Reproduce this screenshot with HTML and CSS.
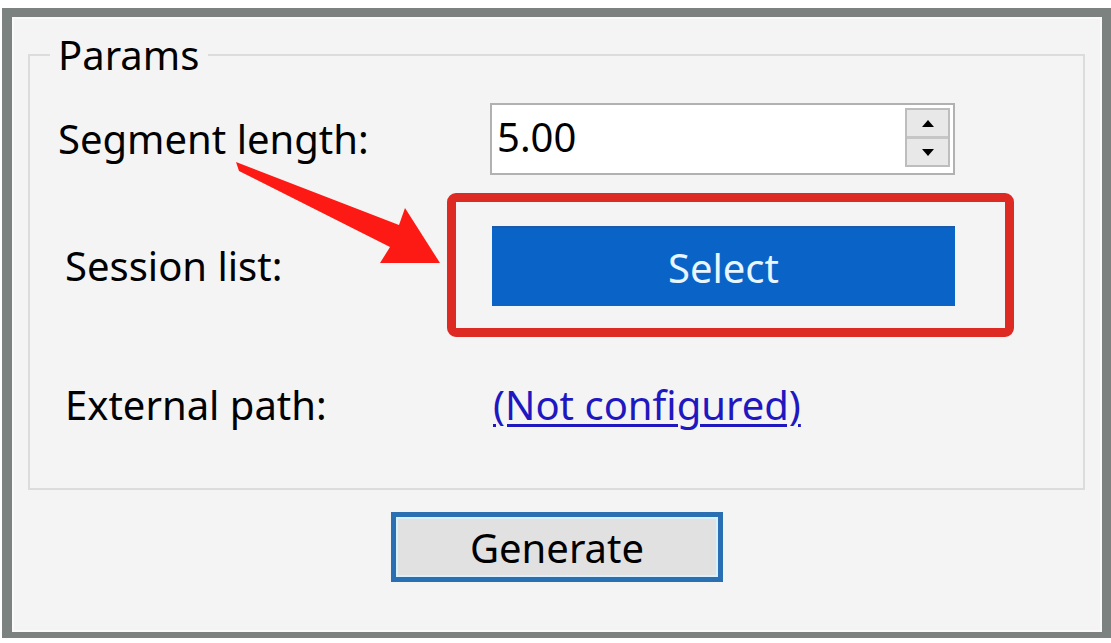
FILE: index.html
```html
<!DOCTYPE html>
<html lang="en">
<head>
<meta charset="utf-8">
<title>Params</title>
<link rel="stylesheet" href="styles.css">
</head>
<body>
<div class="window">
  <fieldset class="group">
    <legend class="group-title">Params</legend>
    <div class="row row-seg">
      <span class="label">Segment length:</span>
      <div class="spin">
        <span class="spin-value">5.00</span>
        <div class="spin-btns">
          <span class="spin-half"><span class="tri-up"></span></span>
          <span class="spin-half spin-half-down"><span class="tri-down"></span></span>
        </div>
      </div>
    </div>
    <div class="row row-session">
      <span class="label indent">Session list:</span>
      <div class="select-wrap">
        <button class="select-btn" type="button">Select</button>
        <div class="highlight"></div>
      </div>
    </div>
    <div class="row row-ext">
      <span class="label indent">External path:</span>
      <a class="link" href="#">(Not configured)</a>
    </div>
  </fieldset>
  <div class="actions">
    <button class="generate" type="button">Generate</button>
  </div>
  <svg class="arrow" width="230" height="120" viewBox="220 150 230 120" aria-hidden="true">
    <polygon points="236,162 399,225 405,208 440,263 380,263 390,247 239,171" fill="#fe1a14"/>
  </svg>
</div>
</body>
</html>
```

FILE: styles.css
```css
html, body {
  margin: 0;
  padding: 0;
  background: #ffffff;
}

body {
  font-family: "Noto Sans", "Open Sans", "DejaVu Sans", sans-serif;
  font-size: 40px;
  color: #000;
}

.window {
  position: relative;
  box-sizing: border-box;
  width: 1109px;
  height: 630px;
  margin: 8px 0 0 2px;
  border-style: solid;
  border-color: #7b827f;
  border-width: 9px 9px 6px 10px;
  background: #f4f4f4;
  box-shadow: inset 0 0 0 2px #fafafa;
}

.group {
  margin: 14px 17px 0 16px;
  padding: 0 0 59px 28px;
  border: 2px solid #dcdcdc;
  min-width: 0;
}

.group-title {
  margin-left: -8px;
  padding: 0 9px 0 8px;
  line-height: 48px;
  font-size: 40px;
}

.row {
  display: flex;
  align-items: center;
}

.row-seg {
  height: 72px;
  margin-top: 24px;
}

.row-session {
  height: 80px;
  margin-top: 51px;
}

.row-ext {
  height: 48px;
  margin-top: 75px;
}

.label {
  width: 432px;
  flex: none;
  line-height: 48px;
}

.label.indent {
  padding-left: 7px;
  box-sizing: border-box;
}

.spin {
  box-sizing: border-box;
  width: 465px;
  height: 72px;
  border: 2px solid #b1b1b1;
  background: #fff;
  display: flex;
  align-items: flex-start;
}

.spin-value {
  flex: 1;
  padding-left: 5px;
  line-height: 64px;
}

.spin-btns {
  box-sizing: border-box;
  width: 45px;
  height: 59px;
  margin: 3px 3px 0 0;
  border: 2px solid #bdbdbd;
  background: #e8e8e8;
  display: flex;
  flex-direction: column;
}

.spin-half {
  flex: 1;
  display: flex;
  align-items: center;
  justify-content: center;
}

.spin-half-down {
  border-top: 3px solid #c6c6c6;
}

.tri-up {
  width: 0;
  height: 0;
  border-left: 6px solid transparent;
  border-right: 6px solid transparent;
  border-bottom: 7px solid #000;
}

.tri-down {
  width: 0;
  height: 0;
  border-left: 6px solid transparent;
  border-right: 6px solid transparent;
  border-top: 7px solid #000;
}

.select-wrap {
  position: relative;
  margin-left: 2px;
  width: 463px;
  height: 80px;
}

.select-btn {
  width: 100%;
  height: 100%;
  border: none;
  border-top: 2px solid #1a5aa8;
  background: #0a64c8;
  color: #e8f6ff;
  font-family: inherit;
  font-size: 40px;
  padding: 0;
}

.highlight {
  position: absolute;
  left: -45px;
  top: -33px;
  width: 567px;
  height: 144px;
  box-sizing: border-box;
  border: 9px solid #dd2a22;
  border-radius: 9px;
  pointer-events: none;
}

.link {
  margin-left: 3px;
  color: #1f18c0;
  text-decoration: underline;
  text-decoration-thickness: 3px;
  text-underline-offset: 4px;
  line-height: 48px;
}

.actions {
  display: flex;
  justify-content: center;
  margin-top: 22px;
}

.generate {
  box-sizing: border-box;
  width: 332px;
  height: 70px;
  border: 5px solid #2a6fb1;
  box-shadow: inset 0 0 0 2px #d9f1ff;
  background: #e1e1e1;
  color: #000;
  font-family: inherit;
  font-size: 40px;
  padding: 0;
}

.arrow {
  position: absolute;
  left: 208px;
  top: 133px;
}
```
